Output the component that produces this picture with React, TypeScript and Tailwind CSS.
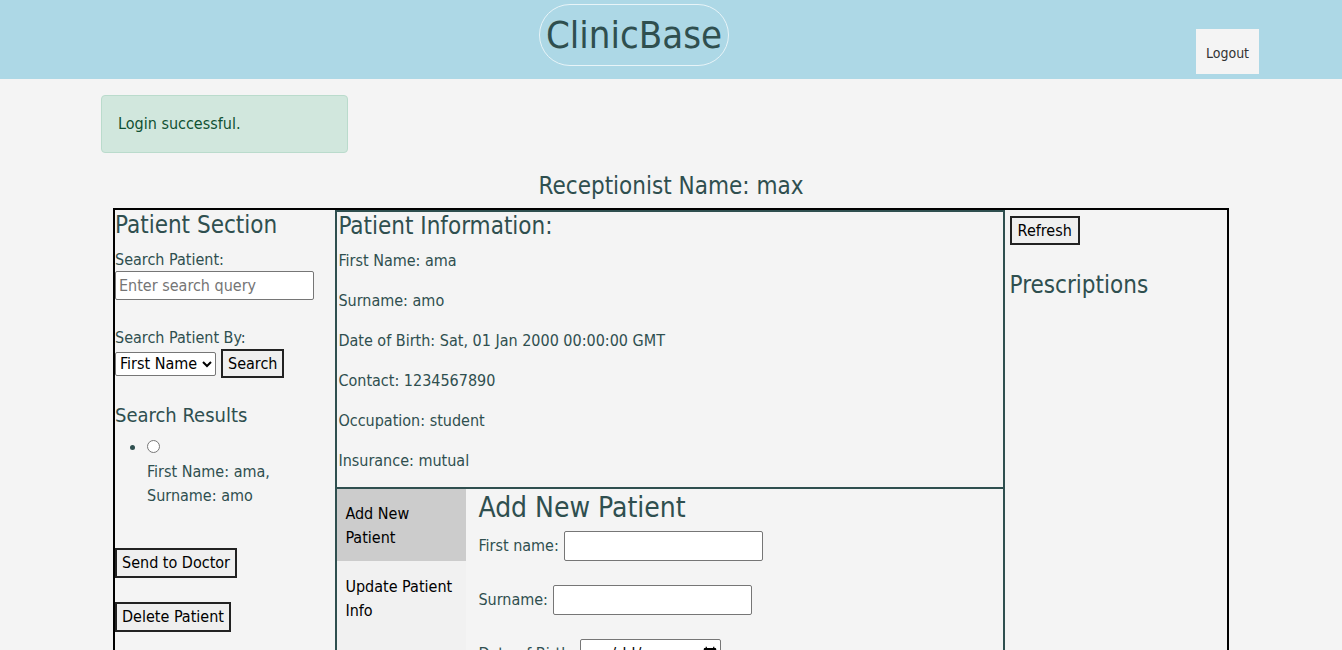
import React from 'react';

const font = "font-['DejaVu_Sans_Condensed','DejaVu_Sans',sans-serif]";

function Btn({ children, className = '' }: { children: React.ReactNode; className?: string }) {
  return (
    <button className={`border-2 border-[#222] bg-[#efefef] px-[5px] text-[16px] leading-[24px] text-black ${className}`}>
      {children}
    </button>
  );
}

export default function App() {
  return (
    <div className={`min-h-[650px] bg-[#f4f4f4] text-[#2f4f4f] ${font}`}>
      {/* header */}
      <header className="relative flex h-[79px] items-start justify-center bg-[#add8e6]">
        <div className="mr-[74px] mt-[4px] flex h-[62px] w-[190px] items-center justify-center rounded-full border border-[#e8f4f8] text-[38px]">
          ClinicBase
        </div>
        <button className="absolute right-[83px] top-[29px] h-[45px] w-[63px] bg-[#f4f4f4] pt-[4px] text-[14px] text-[#333]">
          Logout
        </button>
      </header>

      <div className="mx-auto w-[1140px] pt-[16px]">
        <div className="w-[247px] rounded-[4px] border border-[#badbcc] bg-[#d1e7dd] px-[16px] py-[16px] text-[16px] leading-[24px] text-[#0f5132]">
          Login successful.
        </div>
      </div>

      <h2 className="mt-[18px] text-center text-[24px] leading-[30px]">Receptionist Name: max</h2>

      <div className="mx-auto mt-[7px] grid h-[460px] w-[1116px] grid-cols-[1fr_3fr_1fr] border-2 border-black">
        {/* left */}
        <div className="border-r-2 border-[#2f4f4f] text-[16px]">
          <h2 className="mt-[1px] text-[24px] leading-[28px]">Patient Section</h2>
          <label className="mt-[9px] block leading-[24px]">Search Patient:</label>
          <input
            placeholder="Enter search query"
            className="-mt-px h-[29px] w-[199px] rounded-[2px] border border-[#767676] bg-white px-[3px] text-[16px] placeholder:text-[#757575]"
          />
          <label className="mt-[26px] block leading-[24px]">Search Patient By:</label>
          <div className="-mt-px flex items-center gap-[5px]">
            <select className="h-[24px] w-[101px] rounded-[2px] border border-[#767676] bg-white text-[16px] text-black">
              <option>First Name</option>
            </select>
            <Btn className="h-[29px]">Search</Btn>
          </div>
          <h3 className="mt-[24px] text-[20px] leading-[26px]">Search Results</h3>
          <ul className="mt-[8px] list-disc pl-[32px] leading-[24px]">
            <li>
              <input type="radio" className="m-0 h-[13px] w-[13px] -translate-y-[2px] align-middle" />
              <div>First Name: ama,</div>
              <div>Surname: amo</div>
            </li>
          </ul>
          <div className="mt-[40px]">
            <Btn className="h-[30px]">Send to Doctor</Btn>
          </div>
          <div className="mt-[24px]">
            <Btn className="h-[30px]">Delete Patient</Btn>
          </div>
        </div>

        {/* middle */}
        <div className="flex flex-col">
          <div className="border-y-2 border-r-2 border-[#2f4f4f] pl-[1px] text-[16px]">
            <h2 className="text-[24px] leading-[28px]">Patient Information:</h2>
            <p className="mt-[9px] leading-[24px]">First Name: ama</p>
            <p className="mt-[16px] leading-[24px]">Surname: amo</p>
            <p className="mt-[16px] leading-[24px]">Date of Birth: Sat, 01 Jan 2000 00:00:00 GMT</p>
            <p className="mt-[16px] leading-[24px]">Contact: 1234567890</p>
            <p className="mt-[16px] leading-[24px]">Occupation: student</p>
            <p className="mb-[14px] mt-[16px] leading-[24px]">Insurance: mutual</p>
          </div>
          <div className="flex flex-1 border-r-2 border-[#2f4f4f]">
            <div className="w-[129px] bg-[#f1f1f1] text-[16px] leading-[24px] text-black">
              <div className="bg-[#ccc] px-[8px] pb-[11px] pt-[13px]">Add New Patient</div>
              <div className="mt-[1px] px-[8px] pb-[11px] pt-[13px]">Update Patient Info</div>
            </div>
            <div className="pl-[12px] text-[16px]">
              <h2 className="mt-[3px] text-[28px] leading-[32px]">Add New Patient</h2>
              <div className="mt-[7px] flex items-center gap-[5px]">
                <label>First name:</label>
                <input className="h-[30px] w-[199px] rounded-[2px] border border-[#767676] bg-white" />
              </div>
              <div className="mt-[24px] flex items-center gap-[5px]">
                <label>Surname:</label>
                <input className="h-[30px] w-[199px] rounded-[2px] border border-[#767676] bg-white" />
              </div>
              <div className="mt-[24px] flex items-center gap-[5px]">
                <label>Date of Birth:</label>
                <input type="date" className="h-[30px] w-[141px] rounded-[2px] border border-[#767676] bg-white text-black" />
              </div>
            </div>
          </div>
        </div>

        {/* right */}
        <div className="pl-[5px] text-[16px]">
          <Btn className="mt-[6px] h-[29px] px-[6px]">Refresh</Btn>
          <h2 className="mt-[25px] text-[24px] leading-[30px]">Prescriptions</h2>
        </div>
      </div>
    </div>
  );
}
